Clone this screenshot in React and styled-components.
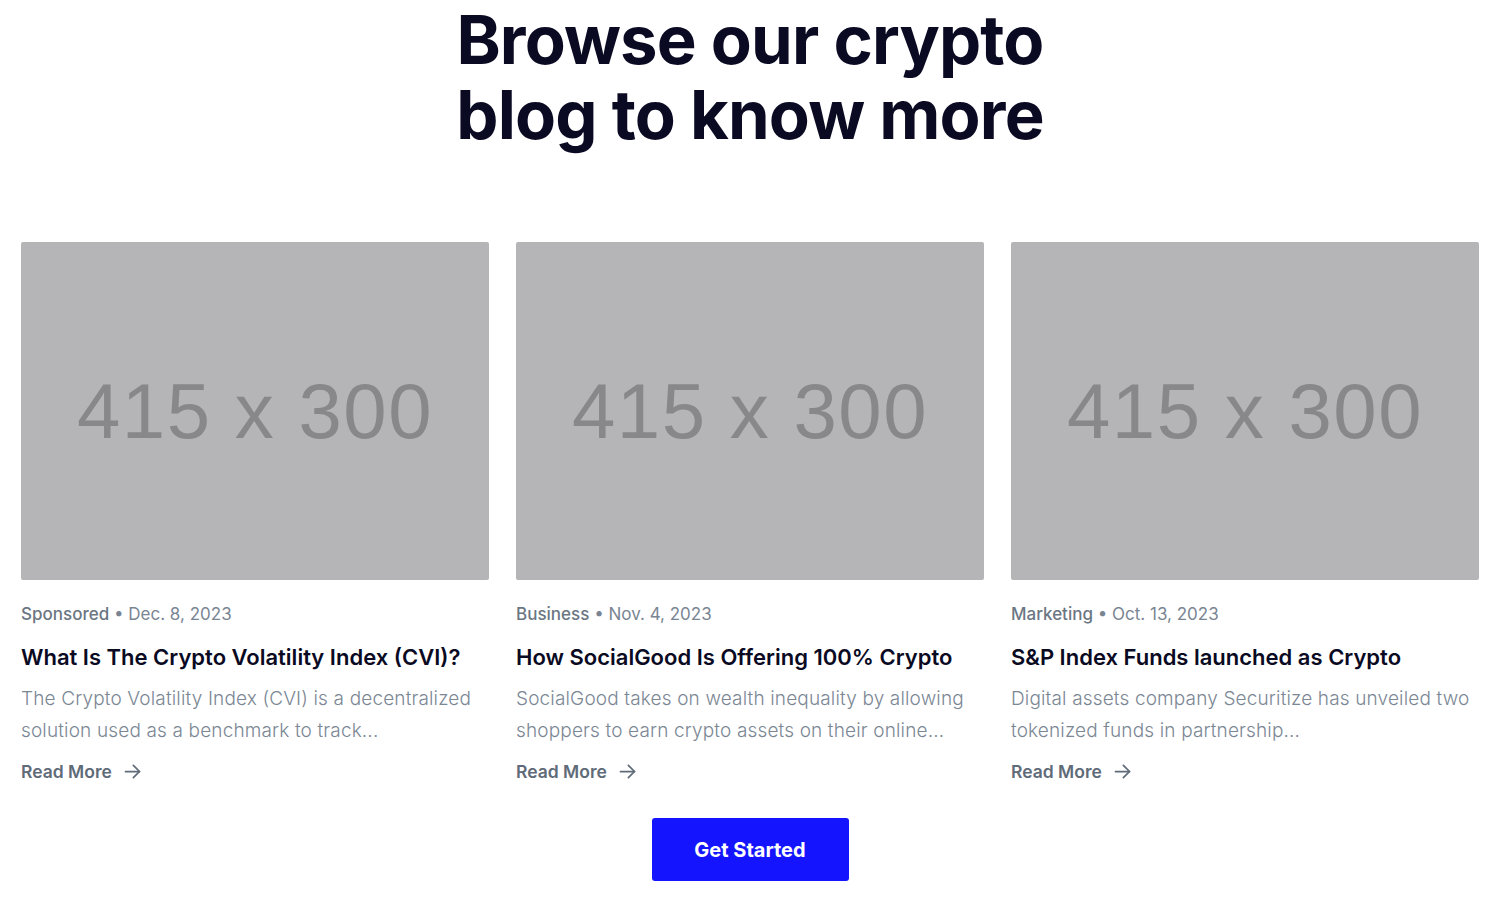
import React from 'react'
import styled, { createGlobalStyle } from 'styled-components'

const GlobalStyle = createGlobalStyle`
  body {
    margin: 0;
    background: #ffffff;
    font-family: Inter, "Noto Sans", "Liberation Sans", sans-serif;
  }
`

const Section = styled.section`
  padding: 0 20px 0 21px;
  display: flex;
  flex-direction: column;
  align-items: center;
`

const Heading = styled.h1`
  margin: 0;
  padding-top: 2px;
  text-align: center;
  font-size: 67px;
  line-height: 75px;
  font-weight: 700;
  letter-spacing: -0.85px;
  color: #0a0a23;
`

const Grid = styled.div`
  width: 100%;
  margin-top: 90px;
  display: grid;
  grid-template-columns: repeat(3, 1fr);
  column-gap: 27px;
`

const Card = styled.article`
  display: flex;
  flex-direction: column;
`

const Thumb = styled.div`
  height: 338px;
  background: #b5b5b8;
  border-radius: 2px;
  display: flex;
  align-items: center;
  justify-content: center;
  color: #88888a;
  font-family: "Liberation Sans", Arial, sans-serif;
  font-size: 78px;
  letter-spacing: 1.5px;
`

const Meta = styled.div`
  margin-top: 23px;
  font-size: 17px;
  line-height: 22px;
  color: #7a8593;
`

const Category = styled.span`
  font-weight: 500;
  color: #6b7683;
`

const Title = styled.h3`
  margin: 18px 0 0;
  font-size: 22px;
  line-height: 28px;
  font-weight: 600;
  letter-spacing: 0;
  color: #0a0a23;
`

const Excerpt = styled.p`
  margin: 12px 0 0;
  font-size: 19px;
  line-height: 32px;
  font-weight: 300;
  letter-spacing: 0.15px;
  color: #7b8794;
`

const ReadMore = styled.a`
  margin-top: 14px;
  display: inline-flex;
  align-items: center;
  gap: 10px;
  font-size: 17.5px;
  font-weight: 600;
  color: #5f6b78;
  text-decoration: none;
`

const Button = styled.a`
  margin-top: 36px;
  width: 197px;
  height: 63px;
  display: flex;
  align-items: center;
  justify-content: center;
  background: #1414ff;
  border-radius: 3px;
  color: #ffffff;
  font-size: 20px;
  font-weight: 700;
  text-decoration: none;
`

const posts = [
  {
    category: 'Sponsored',
    date: 'Dec. 8, 2023',
    title: 'What Is The Crypto Volatility Index (CVI)?',
    excerpt: 'The Crypto Volatility Index (CVI) is a decentralized solution used as a benchmark to track...',
  },
  {
    category: 'Business',
    date: 'Nov. 4, 2023',
    title: 'How SocialGood Is Offering 100% Crypto',
    excerpt: 'SocialGood takes on wealth inequality by allowing shoppers to earn crypto assets on their online...',
  },
  {
    category: 'Marketing',
    date: 'Oct. 13, 2023',
    title: 'S&P Index Funds launched as Crypto',
    excerpt: 'Digital assets company Securitize has unveiled two tokenized funds in partnership...',
  },
]

const Arrow = () => (
  <svg width="21" height="21" viewBox="0 0 24 24" fill="none" stroke="currentColor" strokeWidth="2" strokeLinecap="round" strokeLinejoin="round">
    <path d="M4 12h16" />
    <path d="M13 5l7 7-7 7" />
  </svg>
)

export default function App() {
  return (
    <>
      <GlobalStyle />
      <Section>
        <Heading>
          Browse our crypto
          <br />
          blog to know more
        </Heading>
        <Grid>
          {posts.map((p) => (
            <Card key={p.title}>
              <Thumb>415 x 300</Thumb>
              <Meta>
                <Category>{p.category}</Category> • {p.date}
              </Meta>
              <Title>{p.title}</Title>
              <Excerpt>{p.excerpt}</Excerpt>
              <ReadMore href="#">
                Read More <Arrow />
              </ReadMore>
            </Card>
          ))}
        </Grid>
        <Button href="#">Get Started</Button>
      </Section>
    </>
  )
}
